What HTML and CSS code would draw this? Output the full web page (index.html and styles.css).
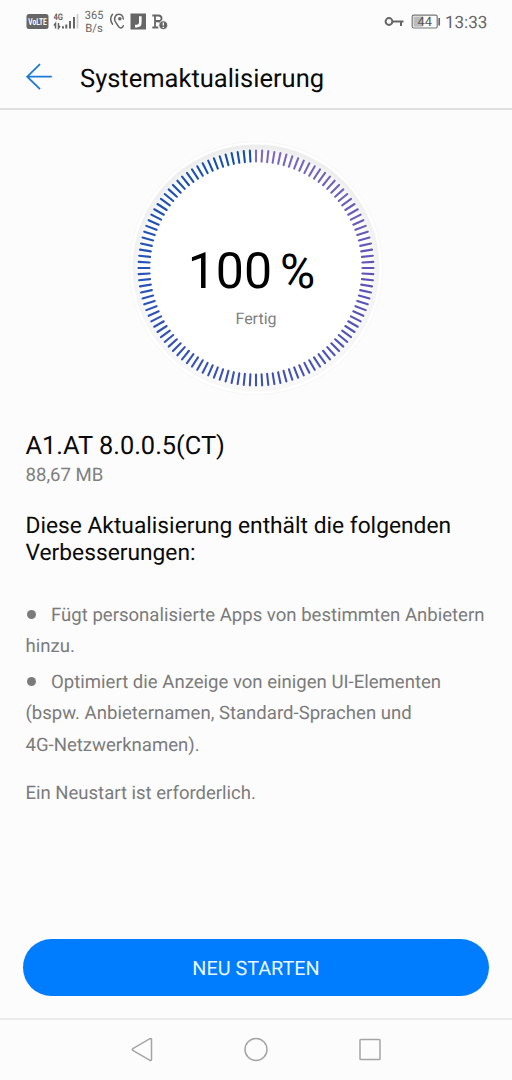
FILE: index.html
```html
<!DOCTYPE html>
<html lang="de">
<head>
<meta charset="utf-8">
<title>Systemaktualisierung</title>
<link rel="stylesheet" href="styles.css">
</head>
<body>
<div class="screen">
  <div class="status">
    <svg class="status-icons" width="156" height="44" viewBox="0 0 156 44">
      <rect x="0.5" y="14" width="22" height="15" rx="2.5" fill="#666"/>
      <text class="volte" x="2.300" y="25.200" textLength="18.500" lengthAdjust="spacingAndGlyphs">VoLTE</text>
      <text class="net" x="27.500" y="19.500" textLength="9.500" lengthAdjust="spacingAndGlyphs">4G</text>
      <path d="M29.500 28.500v-5l-1.600 2M32.500 23v5l1.600-2" fill="none" stroke="#666" stroke-width="1.500"/>
      <path d="M37 26.300v2.200M40.300 24.500v4M44 21v7.500M48 17v11.500" stroke="#666" stroke-width="2"/>
      <path d="M51.500 14v14.500" stroke="#ccc" stroke-width="1.700"/>
      <text class="rate" x="58.800" y="19" textLength="18.500" lengthAdjust="spacingAndGlyphs">365</text>
      <text class="rate" x="59.300" y="32.300" textLength="17.500" lengthAdjust="spacingAndGlyphs">B/s</text>
      <g fill="none" stroke="#666" stroke-width="1.500" stroke-linecap="round">
        <path d="M86.500 14.300c-2.300 3-2.300 6.800 0 9.800"/>
        <path d="M90.500 14.800c-2.500 2.800-2.300 6 0 8.700 1.500 1.700 2 4.700 4.500 4.500 1.300-.1 1.900-1 2.300-2.200"/>
        <path d="M90.500 14.800c3.500-1.800 7 .5 6.800 4.200"/>
      </g>
      <circle cx="93.800" cy="18.800" r="1.800" fill="#666"/>
      <rect x="104.500" y="13.500" width="15.500" height="16" fill="#666"/>
      <path d="M114.300 16.300v6.200q0 3.600-3.600 3.600h-1.700" fill="none" stroke="#fff" stroke-width="2.600"/>
      <path d="M126.300 15.500h6c4.300 0 4.300 5.500.3 5.500h-3c5.500 0 5.500 2 5.500 3M126.300 27.500h6M129 15.500v12" fill="none" stroke="#666" stroke-width="1.800"/>
      <circle cx="137.300" cy="25.200" r="4.400" fill="#666" stroke="#fcfcfc" stroke-width=".8"/>
      <path d="M137.300 22.400v3.200M137.300 26.700v1.300" stroke="#fff" stroke-width="1.300"/>
    </svg>
    <div class="status-right">
      <svg width="57" height="44" viewBox="0 0 57 44">
        <circle cx="5" cy="21.500" r="3.400" fill="none" stroke="#666" stroke-width="2"/>
        <path d="M8.500 21.500h11M17 21.500v4.500" fill="none" stroke="#666" stroke-width="2"/>
        <rect x="28.200" y="15.200" width="25" height="12.800" rx="1.500" fill="#fcfcfc" stroke="#777" stroke-width="1.200"/>
        <path d="M29.500 16.500h9v10.200h-9z" fill="#bbb"/>
        <text class="battery" x="33.500" y="26.200" textLength="14.500" lengthAdjust="spacingAndGlyphs">44</text>
        <path d="M55.200 18v7.500" stroke="#666" stroke-width="1.700"/>
      </svg>
      <span class="clock">13:33</span>
    </div>
  </div>
  <header class="header">
    <svg width="28" height="28" viewBox="0 0 28 28"><path d="M15 2.200L2.200 14.700l12.800 12.500M2.200 14.700h24.600" fill="none" stroke="#1b7ad8" stroke-width="1.800"/></svg>
    <h1 class="title">Systemaktualisierung</h1>
  </header>
  <main class="content">
    <div class="gauge">
      <svg class="dial" width="256" height="256" viewBox="-128 -128 256 256">
        <defs>
          <linearGradient id="rim" x1="0" y1="0" x2="0" y2="1">
            <stop offset="0" stop-color="#ededed"/><stop offset=".5" stop-color="#f3f3f3"/><stop offset="1" stop-color="#f8f8f8"/>
          </linearGradient>
          <radialGradient id="face"><stop offset=".93" stop-color="#fff"/><stop offset="1" stop-color="#fff" stop-opacity="0"/></radialGradient>
        </defs>
        <circle r="126.500" fill="#fff" stroke="#f7f7f7"/>
        <circle r="123.500" fill="url(#rim)"/>
        <circle r="121" fill="url(#face)"/>
        <g id="ticks"></g>
      </svg>
      <div class="reading">
        <div class="percent"><span class="number">100</span><span class="sign">%</span></div>
        <div class="state">Fertig</div>
      </div>
    </div>
    <h2 class="version">A1.AT 8.0.0.5(CT)</h2>
    <p class="size">88,67 MB</p>
    <h3 class="intro">Diese Aktualisierung enthält die folgenden<br>Verbesserungen:</h3>
    <ul class="changes">
      <li>Fügt personalisierte Apps von bestimmten Anbietern<br>hinzu.</li>
      <li>Optimiert die Anzeige von einigen UI-Elementen<br>(bspw. Anbieternamen, Standard-Sprachen und<br>4G-Netzwerknamen).</li>
    </ul>
    <p class="note">Ein Neustart ist erforderlich.</p>
  </main>
  <button class="restart">NEU STARTEN</button>
  <nav class="nav">
    <svg width="24" height="26" viewBox="0 0 24 26"><path d="M2.800 11.700L20 1.700Q21.500 1 21.500 2.500V22.500Q21.500 24 20 23.300L2.800 13.300Q1.800 12.500 2.800 11.700z"/></svg>
    <svg width="24" height="26" viewBox="0 0 24 26"><circle cx="12" cy="12.500" r="11"/></svg>
    <svg width="24" height="26" viewBox="0 0 24 26"><rect x="2" y="2.500" width="20" height="20" rx=".8"/></svg>
  </nav>
</div>
<script src="dial.js"></script>
</body>
</html>
```
FILE: styles.css
```css
* { box-sizing: border-box; margin: 0; padding: 0; }
body { background: #fcfcfc; font-family: Roboto, "Noto Sans", sans-serif; color: #0a0a0a; text-rendering: geometricPrecision; }
h1, h2, h3 { font-weight: 400; }
.screen { width: 512px; height: 1080px; display: flex; flex-direction: column; overflow: hidden; }
.status { height: 44px; padding: 0 24px 0 26px; display: flex; justify-content: space-between; flex: none; }
.status-right { display: flex; align-items: center; gap: 4px; }
.clock { font-size: 17px; line-height: 44px; padding-top: 2px; color: #666; width: 43px; white-space: nowrap; }
.volte { font-size: 9.500px; font-weight: 700; fill: #fff; }
.net { font-size: 9px; font-weight: 700; fill: #666; }
.rate { font-size: 11.500px; fill: #666; }
.battery { font-size: 13px; fill: #555; }
.header { height: 66px; flex: none; padding: 0 25px 0; display: flex; align-items: center; gap: 27px; border-bottom: 2px solid #dfdfdf; }
.title { font-size: 25.500px; line-height: 30px; padding-top: 6px; }
.content { flex: 1; padding: 30px 0 0 25.500px; }
.gauge { width: 256px; height: 256px; margin: 0 0 0 102.500px; display: grid; }
.dial, .reading { grid-area: 1 / 1; }
.reading { text-align: center; padding-top: 103px; }
.percent { display: flex; justify-content: center; align-items: baseline; gap: 8px; line-height: 58px; color: #000; padding-right: 9px; }
.number { font-size: 50px; }
.sign { font-size: 48px; }
.state { font-size: 16px; line-height: 20px; margin-top: 8px; color: #808080; }
.version { font-size: 25.400px; line-height: 32px; margin-top: 34px; }
.size { font-size: 18.600px; line-height: 24px; margin-top: 1px; color: #808080; }
.intro { font-size: 22.780px; line-height: 27px; margin-top: 25px; }
.changes { list-style: none; margin-top: 33.700px; font-size: 18.570px; line-height: 31.700px; color: #7b7b7b; white-space: nowrap; }
.changes li + li { margin-top: 3.500px; }
.changes li::before { content: ""; display: inline-block; width: 9px; height: 9px; border-radius: 50%; background: currentColor; margin: 0 15.500px 2px 1px; vertical-align: middle; }
.note { font-size: 18.500px; line-height: 32px; margin-top: 15.300px; color: #7b7b7b; }
.restart { flex: none; height: 57px; margin: 0 23px 22px; padding-top: 2px; border: 0; border-radius: 29px; background: #007dff; color: #e8f6ff; font: 400 19.800px/55px Roboto, "Noto Sans", sans-serif; text-rendering: inherit; }
.nav { flex: none; height: 62px; border-top: 2px solid #ebebeb; display: flex; justify-content: center; align-items: center; gap: 90px; }
.nav svg { fill: none; stroke: #a5a5a5; stroke-width: 1.500; }
```
FILE: dial.js
```js
// Draws the 120 progress ticks, shading from violet to blue clockwise.
const stops = [[0, [126, 108, 194]], [0.25, [96, 84, 184]], [0.5, [62, 82, 182]], [0.75, [38, 82, 184]], [1, [20, 80, 172]]];
const group = document.getElementById("ticks");
for (let i = 0; i < 120; i++) {
  const t = i / 120;
  const k = Math.min(3, Math.floor(t * 4));
  const f = t * 4 - k;
  const c = stops[k][1].map((v, n) => Math.round(v + (stops[k + 1][1][n] - v) * f));
  const line = document.createElementNS("http://www.w3.org/2000/svg", "line");
  line.setAttribute("y1", -117.5);
  line.setAttribute("y2", -106.5);
  line.setAttribute("stroke", `rgb(${c})`);
  line.setAttribute("stroke-width", 2.1);
  line.setAttribute("stroke-linecap", "round");
  line.setAttribute("transform", `rotate(${i * 3})`);
  group.appendChild(line);
}
```
